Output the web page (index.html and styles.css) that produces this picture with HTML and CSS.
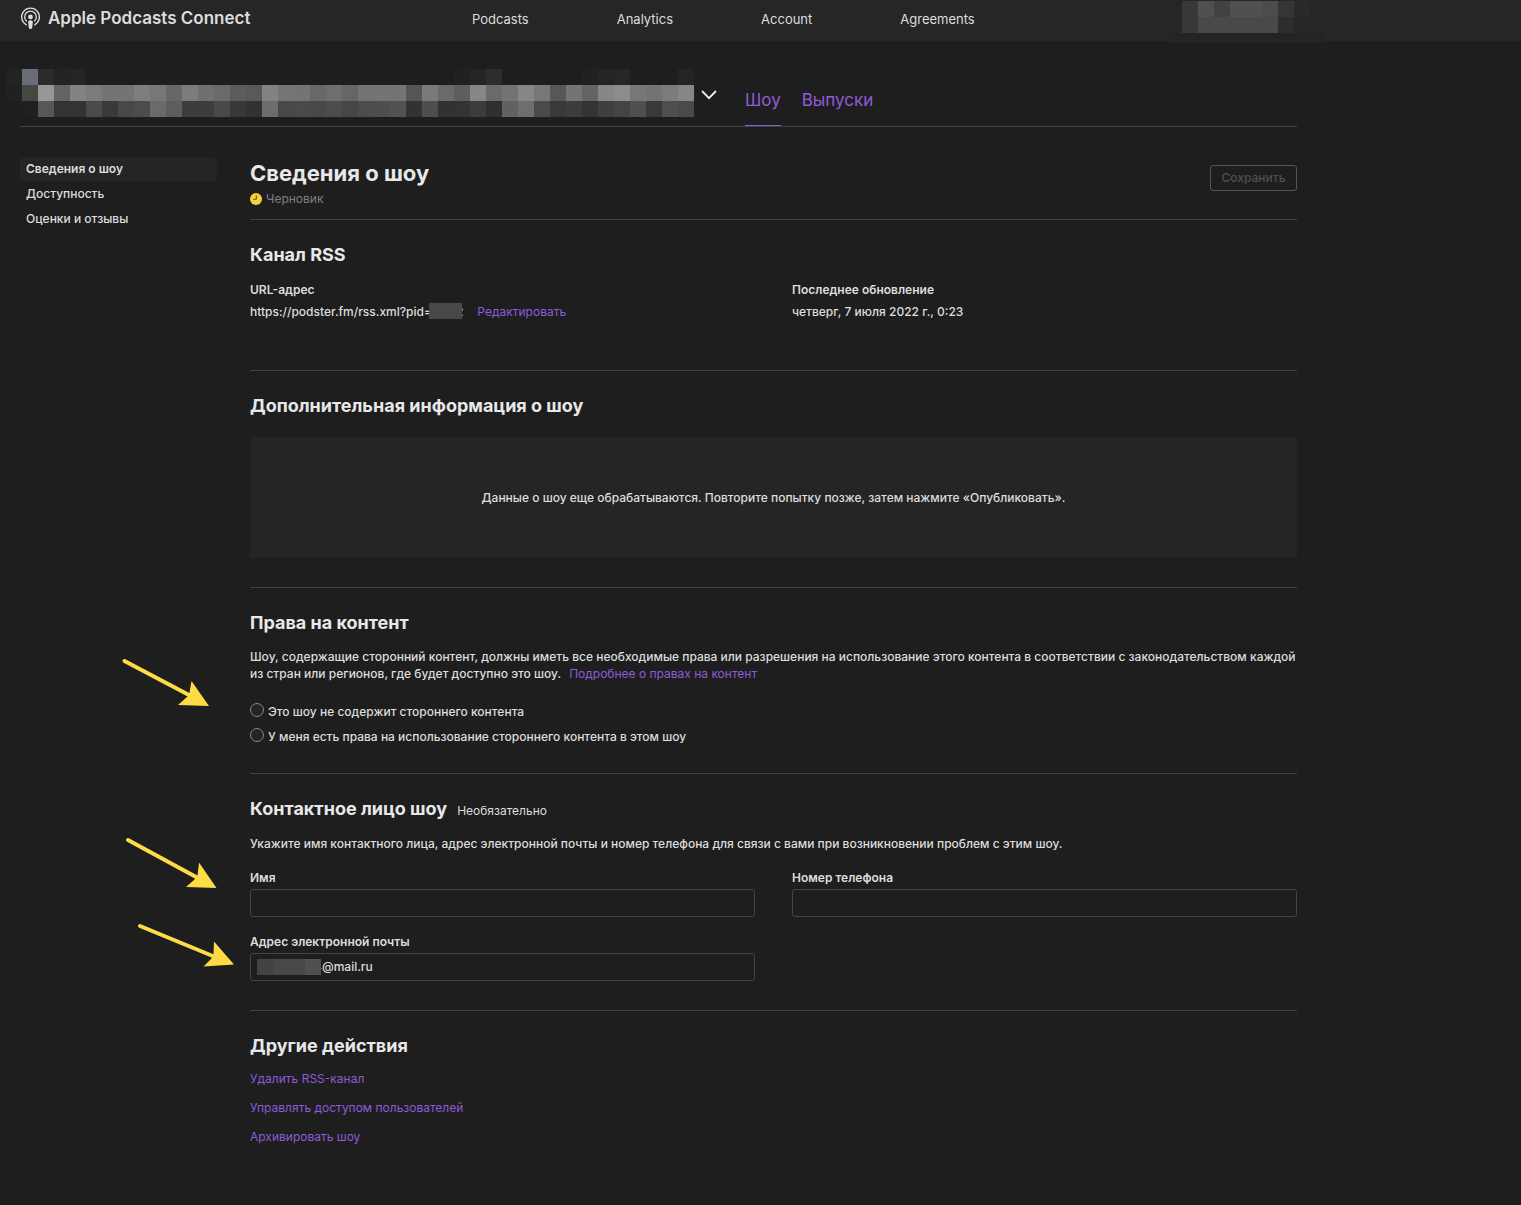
FILE: index.html
```html
<!DOCTYPE html>
<html lang="ru">
<head>
<meta charset="utf-8">
<title>Apple Podcasts Connect</title>
<link rel="stylesheet" href="styles.css">
</head>
<body>
<header class="topbar">
  <a class="brand" href="#">
    <svg class="brand-icon" viewBox="0 0 22 24" aria-hidden="true">
      <g fill="none" stroke="currentColor" stroke-linecap="round">
        <path stroke-width="1.4" d="M6.6 18.6A9.3 9.3 0 1 1 15.4 18.6"/>
        <path stroke-width="1.4" d="M6.7 14.7A6.1 6.1 0 1 1 15.3 14.7"/>
      </g>
      <circle cx="11" cy="10.3" r="2.5" fill="currentColor"/>
      <path fill="currentColor" d="M8.5 15.6Q8.5 13.9 11 13.9T13.5 15.6L12.8 21.4Q12.5 23 11 23T9.2 21.4Z"/>
    </svg>
    <span>Apple Podcasts Connect</span>
  </a>
  <nav class="topnav">
    <a href="#">Podcasts</a>
    <a href="#">Analytics</a>
    <a href="#">Account</a>
    <a href="#">Agreements</a>
  </nav>
  <svg class="user-mosaic" viewBox="-15 0 156 42" shape-rendering="crispEdges" aria-hidden="true">
    <path fill="#242424" d="M-15 32h156v10H-15z"/>
    <path fill="#383838" d="M0 0h16v32H0z"/>
    <path fill="#505050" d="M16 0h16v16H16zM48 0h32v16H48z"/>
    <path fill="#424242" d="M32 0h16v16H32z"/>
    <path fill="#4c4c4c" d="M80 0h16v16H80z"/>
    <path fill="#494949" d="M16 16h80v16H16z"/>
    <path fill="#353535" d="M96 0h16v16H96z"/>
    <path fill="#2d2d2d" d="M96 16h16v16H96z"/>
    <path fill="#292929" d="M112 0h16v16h-16z"/>
  </svg>
</header>

<div class="page">
  <div class="showbar">
    <button class="show-picker" type="button" aria-label="Выбрать шоу">
      <svg class="show-mosaic" id="show-mosaic" viewBox="0 0 688 48" shape-rendering="crispEdges" aria-hidden="true"></svg>
      <svg class="chevron" viewBox="0 0 16 10" aria-hidden="true"><path d="M1.5 1.5L8 8.2L14.5 1.5" fill="none" stroke="#eee" stroke-width="1.8" stroke-linecap="round"/></svg>
    </button>
    <nav class="tabs">
      <a class="tab tab-active" href="#">Шоу</a>
      <a class="tab" href="#">Выпуски</a>
    </nav>
  </div>

  <div class="columns">
    <nav class="sidebar">
      <a class="side-link side-active" href="#">Сведения о шоу</a>
      <a class="side-link" href="#">Доступность</a>
      <a class="side-link" href="#">Оценки и отзывы</a>
    </nav>

    <main class="content">
      <div class="title-row">
        <div>
          <h1>Сведения о шоу</h1>
          <p class="status">
            <svg class="clock" viewBox="0 0 12 12" aria-hidden="true"><circle cx="6" cy="6" r="6" fill="#f9cf3a"/><path d="M6.3 2.5V6.3H3.3" fill="none" stroke="#5a4a1a" stroke-width="1"/></svg>
            Черновик
          </p>
        </div>
        <button class="save" type="button" disabled>Сохранить</button>
      </div>

      <section class="section rss">
        <h2>Канал RSS</h2>
        <div class="grid">
          <div>
            <h3>URL-адрес</h3>
            <p class="url"><span>https://podster.fm/rss.xml?pid=</span><span class="mask"></span><span>2</span><a class="edit" href="#">Редактировать</a></p>
          </div>
          <div>
            <h3>Последнее обновление</h3>
            <p>четверг, 7 июля 2022 г., 0:23</p>
          </div>
        </div>
      </section>

      <section class="section">
        <h2>Дополнительная информация о шоу</h2>
        <p class="notice">Данные о шоу еще обрабатываются. Повторите попытку позже, затем нажмите «Опубликовать».</p>
      </section>

      <section class="section rights">
        <h2>Права на контент</h2>
        <p class="rights-text">Шоу, содержащие сторонний контент, должны иметь все необходимые права или разрешения на использование этого контента в соответствии с законодательством каждой из стран или регионов, где будет доступно это шоу. <a class="more" href="#">Подробнее о правах на контент</a></p>
        <div class="choices">
          <label class="choice"><input type="radio" name="rights"><span>Это шоу не содержит стороннего контента</span></label>
          <label class="choice"><input type="radio" name="rights"><span>У меня есть права на использование стороннего контента в этом шоу</span></label>
        </div>
        <svg class="arrow arrow-rights" viewBox="120 655 92 54" aria-hidden="true">
          <path class="shaft" d="M124.5 661L189 695"/>
          <path class="head" d="M209 706L191.5 681L189.5 692.5L187 697L178 705Z"/>
        </svg>
      </section>

      <section class="section contact">
        <h2>Контактное лицо шоу <small>Необязательно</small></h2>
        <p class="contact-text">Укажите имя контактного лица, адрес электронной почты и номер телефона для связи с вами при возникновении проблем с этим шоу.</p>
        <div class="grid fields">
          <div class="field">
            <label for="name">Имя</label>
            <input id="name" type="text">
          </div>
          <div class="field">
            <label for="phone">Номер телефона</label>
            <input id="phone" type="tel">
          </div>
          <div class="field email">
            <label for="email">Адрес электронной почты</label>
            <input id="email" type="text" value="4@mail.ru">
            <span class="email-mask"></span>
          </div>
        </div>
        <svg class="arrow arrow-contact" viewBox="124 836 114 134" aria-hidden="true">
          <path class="shaft" d="M128 840L197 877.5M140 926L214 956.5"/>
          <path class="head" d="M216.5 888L199 862.5L197.5 875.5L194 880L186 887ZM234 964.5L214 941.5L213.5 954L211 959L203.5 966.5Z"/>
        </svg>
      </section>

      <section class="section actions">
        <h2>Другие действия</h2>
        <a href="#">Удалить RSS-канал</a>
        <a href="#">Управлять доступом пользователей</a>
        <a href="#">Архивировать шоу</a>
      </section>
    </main>
  </div>
</div>
<script src="mosaic.js"></script>
</body>
</html>
```

FILE: styles.css
```css
* { box-sizing: border-box; }

body {
  margin: 0;
  background: #1e1e1e;
  color: #ddd;
  font: 500 12px/17px Inter, "Noto Sans", sans-serif;
}

h1, h2, h3, p { margin: 0; }
a { color: #8e5bd9; font-weight: 400; text-decoration: none; }

/* Top bar */
.topbar { display: flex; height: 41px; background: #262626; padding-left: 20px; }
.brand {
  display: flex;
  gap: 7px;
  align-items: center;
  width: 452px;
  padding-bottom: 5px;
  color: #ddd;
  font-size: 17px;
  font-weight: 600;
}
.brand-icon { width: 21px; height: 23px; }
.topnav { display: flex; gap: 88px; align-items: center; width: 695px; padding-bottom: 2px; font-size: 13px; }
.topnav a { color: #ddd; }
.user-mosaic { flex: none; width: 156px; height: 42px; margin-top: 1px; }

/* Show picker and tabs */
.page { padding: 28px 224px 48px 20px; }
.showbar { display: flex; height: 58px; border-bottom: 1px solid #424242; }
.show-picker { display: flex; width: 725px; padding: 0; border: 0; background: none; }
.show-mosaic { flex: none; width: 688px; height: 48px; margin-left: -14px; }
.chevron { width: 16px; height: 10px; margin: 21px 0 0 7px; }
.tabs { display: flex; gap: 21px; font-size: 17px; }
.tab { padding: 23px 0 16px; }
.tab-active { border-bottom: 1px solid #8e5bd9; }

/* Columns */
.columns { display: flex; gap: 33px; padding-top: 31px; }
.sidebar { width: 197px; }
.side-link { display: block; margin-bottom: 2px; padding: 2px 6px 4px; color: #ddd; font-weight: 500; }
.side-active { background: #252525; border-radius: 3px; font-weight: 600; }
.content { flex: 1; }

.title-row { display: flex; justify-content: space-between; height: 61px; }
h1 { font-size: 22px; line-height: 30px; color: #e8e8e8; }
.status { display: flex; gap: 4px; align-items: center; margin-top: 2px; color: #7f7f7f; font-weight: 400; }
.clock { width: 12px; height: 12px; }
.save {
  width: 87px;
  height: 26px;
  margin-top: 7px;
  padding: 0 0 2px;
  border: 1px solid #555;
  border-radius: 3px;
  background: none;
  color: #505050;
  font: inherit;
}

/* Sections */
.section { position: relative; border-top: 1px solid #424242; padding: 23px 0 29px; }
h2 { display: flex; gap: 10px; align-items: baseline; font-size: 18px; line-height: 24px; color: #e8e8e8; }
h3 { margin-bottom: 5px; font-size: 12px; font-weight: 600; line-height: 17px; }
.grid { display: grid; grid-template-columns: 1fr 1fr; column-gap: 37px; margin-top: 14px; }

.rss { min-height: 151px; }
.url { display: flex; }
.mask { position: relative; width: 33px; height: 16px; margin: 0 -6px 0 -3px; background: #484848; }
.edit { margin-left: 14px; }

.notice {
  display: flex;
  align-items: center;
  justify-content: center;
  min-height: 121px;
  margin-top: 19px;
  background: #252525;
  border-radius: 3px;
}

.rights { padding-bottom: 28px; }
.rights-text { margin: 13px 0 21px; }
.more { margin-left: 5px; }
.choices { display: grid; gap: 8px; }
.choice { display: flex; gap: 4px; }
.choice input { appearance: none; width: 14px; height: 14px; margin: 0; border: 1px solid #888; border-radius: 50%; background: #242424; }

small { color: #ddd; font-size: 12px; font-weight: 400; line-height: 17px; }
.contact-text { margin-top: 14px; }
.fields { row-gap: 16px; margin-top: 17px; }
.field { position: relative; display: flex; flex-direction: column; gap: 3px; }
.field label { font-weight: 600; }
.field input {
  height: 28px;
  padding: 0 6px;
  border: 1px solid #444;
  border-radius: 3px;
  background: none;
  color: #ddd;
  font: inherit;
}
.email input { padding: 0 6px 2px 63px; }
.email-mask {
  position: absolute;
  left: 7px;
  bottom: 6px;
  width: 64px;
  height: 16px;
  background: linear-gradient(90deg, #434343 16px, #484848 16px 48px, #505050 48px);
}

.actions { display: flex; flex-direction: column; align-items: flex-start; gap: 12px; }

/* Arrows pointing at the parts to fill in */
.arrow { position: absolute; pointer-events: none; }
.arrow-rights { left: -130px; top: 67px; width: 92px; height: 54px; }
.arrow-contact { left: -126px; top: 62px; width: 114px; height: 134px; }
.shaft { fill: none; stroke: #ffdb45; stroke-width: 4; stroke-linecap: round; }
.head { fill: #ffdb45; }
```

FILE: mosaic.js
```js
// Grey level of each 16px cell in the obscured show title, row by row.
const rows = [
  "23 69 2b 23 25 - - - - - - - - - - - - - - - - - - - - - - - 21 25 2d - - - - - 21 24 26 - - - 24",
  "21 43 97 64 83 7b 74 74 7e 77 67 7c 70 6a 5c 59 82 75 74 68 6e 66 74 74 74 55 7a 6a 5e 86 6a 73 86 77 57 74 64 86 8c 77 74 7c 86",
  "- 20 57 33 33 4a 39 48 4c 6a 5d 3d 3d 49 38 32 6d 48 4a 48 4c 46 4c 4e 52 32 4e 32 33 3c 2f 61 6e 4a 39 3d 34 3f 44 4f 39 4f 4a"
];
const tinted = { "0,1": "#696d75", "1,1": "#43493f" };
const svg = document.getElementById("show-mosaic");
rows.forEach((row, r) => row.split(" ").forEach((level, c) => {
  if (level === "-") return;
  const cell = document.createElementNS("http://www.w3.org/2000/svg", "rect");
  cell.setAttribute("x", c * 16);
  cell.setAttribute("y", r * 16);
  cell.setAttribute("width", 16);
  cell.setAttribute("height", 16);
  cell.setAttribute("fill", tinted[r + "," + c] || "#" + level.repeat(3));
  svg.appendChild(cell);
}));
```
